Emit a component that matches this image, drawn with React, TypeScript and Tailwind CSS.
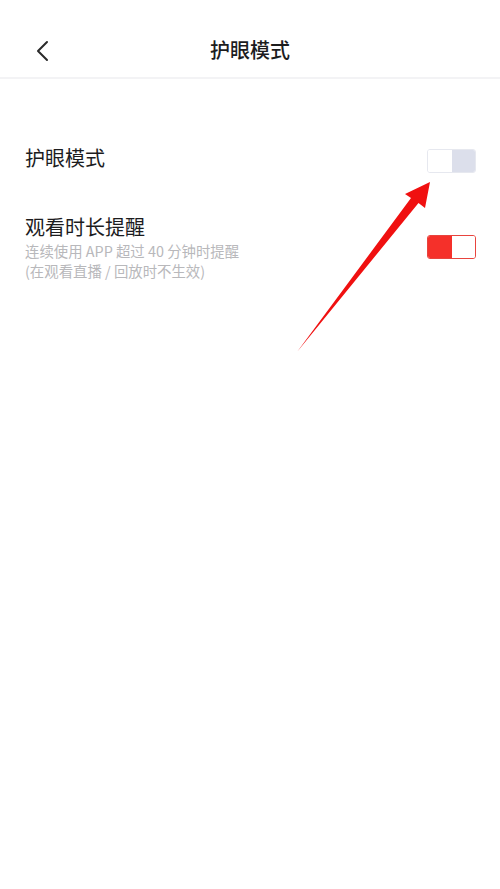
import React from "react";

function Toggle({ on }: { on: boolean }) {
  if (on) {
    return (
      <div className="flex h-[24px] w-[49px] overflow-hidden rounded-[3px] border border-[#e8443e]">
        <div className="h-full w-1/2 bg-[#f5302a]" />
        <div className="h-full w-1/2 bg-white" />
      </div>
    );
  }
  return (
    <div className="flex h-[24px] w-[49px] overflow-hidden rounded-[3px] border border-[#e6e8ef]">
      <div className="h-full w-1/2 bg-white" />
      <div className="h-full w-1/2 bg-[#dcdfeb]" />
    </div>
  );
}

export default function App() {
  return (
    <div
      className="relative h-[889px] w-[500px] overflow-hidden bg-white"
      style={{ fontFamily: '"Noto Sans CJK SC", "Noto Sans", sans-serif' }}
    >
      <header className="relative flex h-[79px] items-start justify-center border-b-2 border-[#f3f3f5] pt-[36px]">
        <svg
          className="absolute left-[34px] top-[40px]"
          width="18"
          height="22"
          viewBox="0 0 18 22"
          fill="none"
        >
          <path d="M13 2 L4 11 L13 20" stroke="#2a2a2a" strokeWidth="2" strokeLinecap="round" strokeLinejoin="round" />
        </svg>
        <h1 className="text-[20px] font-medium leading-[28px] text-[#1c1c1e]">护眼模式</h1>
      </header>

      <main className="flex flex-col gap-[40px] pl-[25px] pr-[24px] pt-[65px]">
        <div className="flex items-start justify-between">
          <span className="text-[20px] leading-[28px] text-[#1c1c1e]">护眼模式</span>
          <div className="mt-[5px]">
            <Toggle on={false} />
          </div>
        </div>
        <div className="flex items-start justify-between">
          <div className="flex flex-col">
            <span className="text-[20px] leading-[28px] text-[#1c1c1e]">观看时长提醒</span>
            <span className="text-[14.4px] leading-[20px] text-[#b8b8bb]">连续使用 APP 超过 40 分钟时提醒</span>
            <span className="text-[14.4px] leading-[20px] text-[#b8b8bb]">(在观看直播 / 回放时不生效)</span>
          </div>
          <div className="mt-[22px]">
            <Toggle on={true} />
          </div>
        </div>
      </main>

      <svg className="pointer-events-none absolute left-0 top-0" width="500" height="889" viewBox="0 0 500 889">
        <polygon
          points="430,182 425,208 418.5,203 297,352 411,198 405,194"
          fill="#f01010"
        />
      </svg>
    </div>
  );
}
